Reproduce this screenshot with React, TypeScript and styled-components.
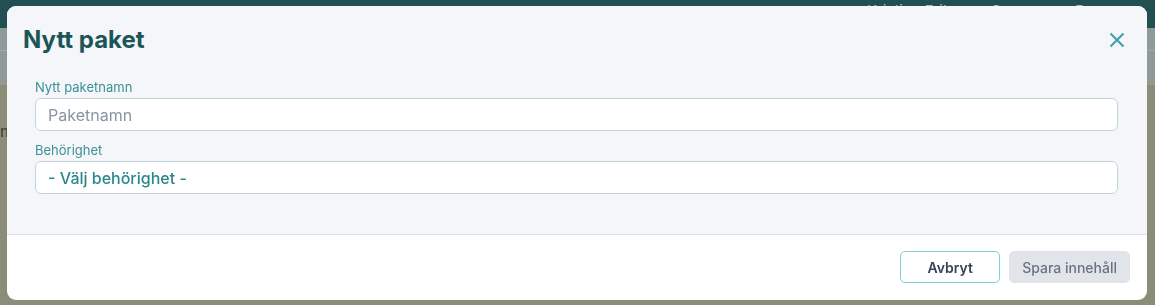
import styled, { createGlobalStyle } from 'styled-components'
import { ReactElement } from 'react'

const GlobalStyle = createGlobalStyle`
  html, body {
    margin: 0;
    padding: 0;
    height: 100%;
    overflow: hidden;
  }
  body {
    font-family: Inter, 'Noto Sans', 'Liberation Sans', sans-serif;
    background: #8b8d78;
  }
`

const Page = styled.div`
  display: flex;
  flex-direction: column;
  height: 305px;
`

const TopBar = styled.div`
  height: 28px;
  background: #224f51;
  display: flex;
  justify-content: flex-end;
  gap: 54px;
  padding-right: 17px;
  color: #aebcbd;
  font-size: 15px;
  overflow: hidden;
`

const TopItem = styled.span`
  margin-top: -7px;
  line-height: 18px;
  display: flex;
  align-items: center;
  gap: 8px;
`

const SubBar = styled.div`
  height: 22px;
  background: #8f9b99;
  border-bottom: 1px solid #a0aaa8;
`

const ToolBar = styled.div`
  height: 32px;
  background: #8f9a98;
  border-bottom: 2px solid #9d9c80;
`

const Content = styled.div`
  flex: 1;
  background: #8b8d78;
  padding: 36px 0 0 0;
  color: #3e3e30;
  font-size: 16px;
`

const Modal = styled.div`
  position: fixed;
  left: 7px;
  top: 6px;
  width: 1140px;
  height: 294px;
  border-radius: 9px;
  overflow: hidden;
  display: flex;
  flex-direction: column;
  background: #fff;
`

const Body = styled.div`
  background: #f4f6fa;
  border-bottom: 1px solid #dcdfe6;
  height: 229px;
  box-sizing: border-box;
  display: flex;
  flex-direction: column;
`

const Header = styled.div`
  display: flex;
  align-items: center;
  justify-content: space-between;
  padding: 20px 20px 0 16px;
`

const Title = styled.h2`
  margin: 0;
  font-size: 24px;
  line-height: 27px;
  font-weight: 700;
  color: #1c5557;
`

const Close = styled.button`
  border: 0;
  background: none;
  padding: 0;
  width: 20px;
  height: 20px;
  display: flex;
  align-items: center;
  justify-content: center;
  color: #3aa1a6;
  cursor: pointer;
`

const Form = styled.div`
  padding: 26px 29px 0 28px;
  display: flex;
  flex-direction: column;
  gap: 11px;
`

const Field = styled.label`
  display: flex;
  flex-direction: column;
  gap: 3px;
`

const Label = styled.span`
  font-size: 13px;
  line-height: 16px;
  color: #3b9196;
`

const Input = styled.input`
  height: 33px;
  box-sizing: border-box;
  border: 1px solid #c3d5da;
  border-radius: 6px;
  background: #fff;
  padding: 0 12px;
  font-family: inherit;
  font-size: 16px;
  color: #2d3748;
  outline: none;
  &::placeholder {
    color: #8c93a3;
  }
`

const Select = styled.div`
  height: 33px;
  box-sizing: border-box;
  border: 1px solid #c3d5da;
  border-radius: 6px;
  background: #fff;
  padding: 0 12px;
  display: flex;
  align-items: center;
  font-size: 16px;
  font-weight: 500;
  color: #2a878c;
`

const Footer = styled.div`
  flex: 1;
  display: flex;
  justify-content: flex-end;
  align-items: flex-start;
  gap: 9px;
  padding: 16px 17px 0 0;
`

const Button = styled.button<{ $primary?: boolean }>`
  height: 32px;
  box-sizing: border-box;
  border-radius: 5px;
  font-family: inherit;
  font-size: 14px;
  font-weight: ${({ $primary }) => ($primary ? 500 : 600)};
  padding: 0 ${({ $primary }) => ($primary ? '12px' : '0')};
  width: ${({ $primary }) => ($primary ? 'auto' : '100px')};
  border: 1px solid ${({ $primary }) => ($primary ? '#e1e4e9' : '#80cfd1')};
  background: ${({ $primary }) => ($primary ? '#e1e4e9' : '#fff')};
  color: ${({ $primary }) => ($primary ? '#6c7280' : '#3a4257')};
`

const App = (): ReactElement => (
  <>
    <GlobalStyle />
    <Page>
      <TopBar>
        <TopItem>Kristina Eriksson ○</TopItem>
        <TopItem>▭ Resurser</TopItem>
      </TopBar>
      <SubBar />
      <ToolBar />
      <Content>m</Content>
    </Page>
    <Modal>
      <Body>
        <Header>
          <Title>Nytt paket</Title>
          <Close aria-label="Stäng">
            <svg width="16" height="16" viewBox="0 0 16 16" fill="none" stroke="currentColor" strokeWidth="2">
              <path d="M1.5 1.5l13 13M14.5 1.5l-13 13" />
            </svg>
          </Close>
        </Header>
        <Form>
          <Field>
            <Label>Nytt paketnamn</Label>
            <Input placeholder="Paketnamn" />
          </Field>
          <Field>
            <Label>Behörighet</Label>
            <Select>- Välj behörighet -</Select>
          </Field>
        </Form>
      </Body>
      <Footer>
        <Button>Avbryt</Button>
        <Button $primary>Spara innehåll</Button>
      </Footer>
    </Modal>
  </>
)

export default App
